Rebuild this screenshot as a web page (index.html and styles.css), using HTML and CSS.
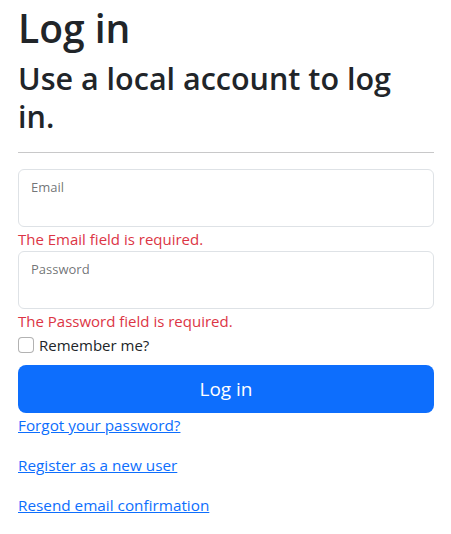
FILE: index.html
```html
<!DOCTYPE html>
<html lang="en">
<head>
<meta charset="utf-8">
<title>Log in</title>
<link rel="stylesheet" href="styles.css">
</head>
<body>
<main class="page">
  <h1 class="title">Log in</h1>
  <section class="login">
    <form class="form" action="#">
      <h2 class="subtitle">Use a local account to log in.</h2>
      <hr class="rule">
      <div class="field">
        <input class="field-input" type="email" aria-label="Email">
        <label class="field-label">Email</label>
      </div>
      <span class="error">The Email field is required.</span>
      <div class="field">
        <input class="field-input" type="password" aria-label="Password">
        <label class="field-label">Password</label>
      </div>
      <span class="error">The Password field is required.</span>
      <div class="check">
        <input class="check-box" type="checkbox" id="remember">
        <label class="check-label" for="remember">Remember me?</label>
      </div>
      <button class="btn" type="button">Log in</button>
      <div class="links">
        <p class="link-row"><a href="#" class="link">Forgot your password?</a></p>
        <p class="link-row"><a href="#" class="link">Register as a new user</a></p>
        <p class="link-row"><a href="#" class="link">Resend email confirmation</a></p>
      </div>
    </form>
  </section>
</main>
</body>
</html>
```
FILE: styles.css
```css
* { box-sizing: border-box; }
html, body { margin: 0; padding: 0; background: #fff; }
body {
  font-family: "Open Sans", "Noto Sans", sans-serif;
  font-size: 16px;
  line-height: 24px;
  color: #212529;
}
.page {
  width: 451px;
  padding: 0 17px 0 18px;
}
.title {
  margin: 0 0 7px;
  padding-top: 4px;
  font-size: 39px;
  line-height: 48px;
  font-weight: 600;
}
.subtitle {
  margin: 0;
  font-size: 30.5px;
  line-height: 38.4px;
  font-weight: 600;
}
.rule {
  margin: 16px 0;
  border: 0;
  border-top: 1px solid #c8c8c9;
}
.form { display: flex; flex-direction: column; }
.field { position: relative; height: 58px; }
.field-input {
  width: 100%;
  height: 58px;
  border: 1px solid #dee2e6;
  border-radius: 6px;
  background: #fff;
  padding: 0 12px;
  font: inherit;
}
.field-label {
  position: absolute;
  left: 13px;
  top: 8px;
  font-size: 13px;
  line-height: 20px;
  color: rgba(33, 37, 41, 0.65);
  pointer-events: none;
}
.error {
  display: block;
  color: #dc3545;
  font-size: 15px;
  line-height: 24px;
}
.check {
  display: flex;
  align-items: center;
  gap: 5px;
  height: 24px;
  margin-bottom: 8px;
}
.check-box {
  appearance: none;
  -webkit-appearance: none;
  margin: 0;
  width: 16px;
  height: 16px;
  border: 1px solid rgba(0, 0, 0, 0.3);
  border-radius: 4px;
  background: #fff;
}
.check-label { font-size: 15px; }
.btn {
  height: 48px;
  width: 100%;
  border: 0;
  border-radius: 8px;
  background: #0d6efd;
  color: #fff;
  font-family: inherit;
  font-size: 19px;
  line-height: 30px;
}
.link-row { margin: 0 0 16px; }
.link { color: #0d6efd; font-size: 15.3px; text-decoration: underline; }
```
